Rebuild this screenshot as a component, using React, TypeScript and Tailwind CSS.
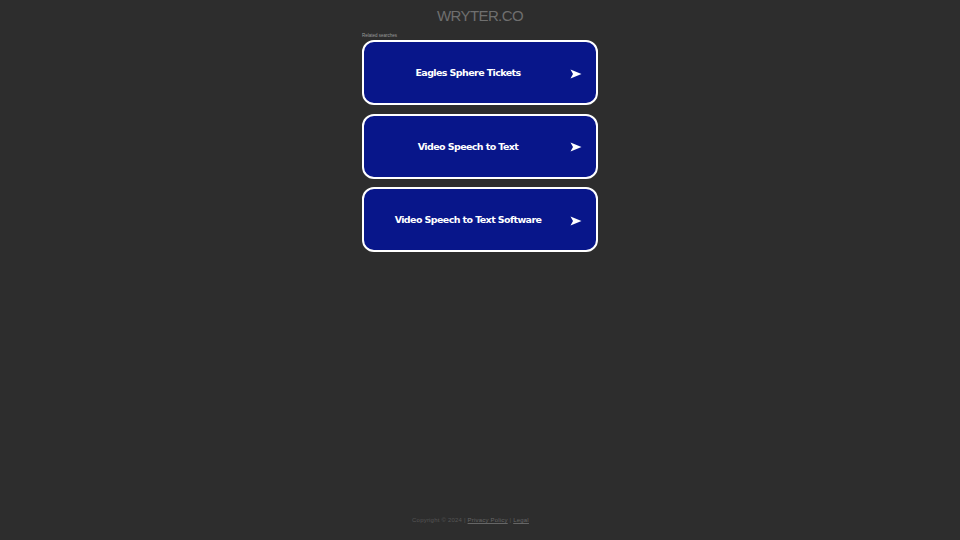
import React from "react";

const links = ["Eagles Sphere Tickets", "Video Speech to Text", "Video Speech to Text Software"];

function Arrow() {
  return (
    <svg width="12" height="10" viewBox="0 0 12 10" className="shrink-0">
      <path d="M0.5 0.5 L11.5 5 L0.5 9.5 L3 5 Z" fill="white" />
    </svg>
  );
}

export default function App() {
  return (
    <div className="flex h-[540px] w-full flex-col items-center bg-[#2d2d2d]">
      <h1 className="mt-[7px] font-['Liberation_Sans',Arial,sans-serif] text-[15px] leading-[18px] tracking-[-0.6px] text-[#6f6f6f]">
        WRYTER.CO
      </h1>
      <div className="mt-[8px] w-[236px]">
        <p className="font-['Liberation_Sans',Arial,sans-serif] text-[4.5px] leading-[5px] text-[#9a9a9a]">Related searches</p>
        <div className="mt-[2px] flex flex-col gap-[8.5px]">
          {links.map((t) => (
            <a
              key={t}
              href="#"
              className="flex h-[65px] items-center rounded-[12px] border-2 border-white bg-[#08168a] pt-[2px] pl-[2px] pr-[14px]"
            >
              <span className="flex-1 text-center font-['DejaVu_Sans',sans-serif] text-[9.5px] font-bold tracking-[-0.6px] text-white">
                {t}
              </span>
              <Arrow />
            </a>
          ))}
        </div>
      </div>
      <div className="mt-auto mb-[15px] mr-[19px] font-['Liberation_Sans',Arial,sans-serif] text-[6px] tracking-[0.2px] text-[#555]">
        Copyright © 2024 | <a href="#" className="text-[#666] underline">Privacy Policy</a> | <a href="#" className="text-[#666] underline">Legal</a>
      </div>
    </div>
  );
}
